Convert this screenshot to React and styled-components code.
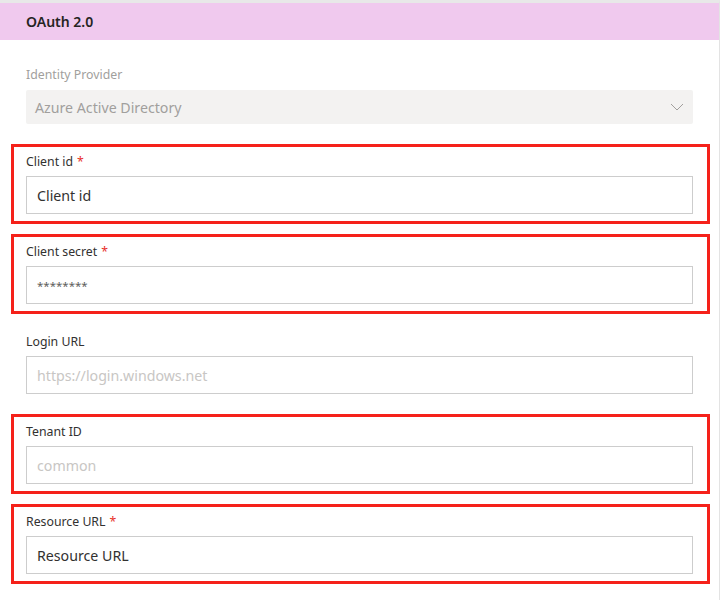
import React from 'react';
import styled, { createGlobalStyle } from 'styled-components';

const GlobalStyle = createGlobalStyle`
  body {
    margin: 0;
    background: #ffffff;
    font-family: "Noto Sans", "Open Sans", sans-serif;
  }
`;

const Page = styled.div`
  width: 720px;
  height: 600px;
  box-sizing: border-box;
  border-right: 1px solid #e3e3e3;
  border-top: 3px solid #e8e8e8;
  background: #ffffff;
`;

const Header = styled.div`
  height: 37px;
  background: #f0c9ee;
  display: flex;
  align-items: center;
  padding-left: 26px;
  font-size: 14px;
  font-weight: 600;
  color: #252423;
`;

const Fields = styled.div`
  padding: 14px 9px 0 11px;
  display: flex;
  flex-direction: column;
  gap: 10px;
`;

const Field = styled.div`
  height: 80px;
  box-sizing: border-box;
  border: 3px solid ${(p) => (p.$highlight ? '#f5211a' : 'transparent')};
  padding: ${(p) => (p.$select ? '8px' : '5px')} 14px 0 12px;
  display: flex;
  flex-direction: column;
  gap: ${(p) => (p.$select ? '5px' : '4px')};
`;

const Label = styled.div`
  font-size: 12.3px;
  line-height: 20px;
  color: ${(p) => (p.$disabled ? '#a19f9d' : '#323130')};
`;

const Required = styled.span`
  color: #e8302a;
  margin-left: 4px;
`;

const Select = styled.div`
  height: 34px;
  background: #f3f2f1;
  border-radius: 2px;
  display: flex;
  align-items: center;
  justify-content: space-between;
  padding: 0 9px;
  font-size: 14.2px;
  color: #a19f9d;
`;

const Input = styled.input`
  height: 38px;
  box-sizing: border-box;
  width: 100%;
  border: 1px solid #cdcdcd;
  padding: 0 10px;
  font-family: inherit;
  font-size: ${(p) => (p.$masked ? '11.5px' : '14.2px')};
  color: ${(p) => (p.$masked ? '#605e5c' : '#323130')};
  background: #ffffff;
  outline: none;
  &::placeholder {
    color: #c8c6c4;
  }
`;

const Chevron = () => (
  <svg width="14" height="8" viewBox="0 0 14 8" fill="none">
    <path d="M1 1l6 6 6-6" stroke="#a19f9d" strokeWidth="1" />
  </svg>
);

const FormField = ({ label, required, highlight, value, placeholder, masked }) => (
  <Field $highlight={highlight}>
    <Label>
      {label}
      {required && <Required>*</Required>}
    </Label>
    <Input $masked={masked} defaultValue={value} placeholder={placeholder} />
  </Field>
);

export default function App() {
  return (
    <>
      <GlobalStyle />
      <Page>
        <Header>OAuth 2.0</Header>
        <Fields>
          <Field $select>
            <Label $disabled>Identity Provider</Label>
            <Select>
              Azure Active Directory
              <Chevron />
            </Select>
          </Field>
          <FormField label="Client id" required highlight value="Client id" />
          <FormField label="Client secret" required highlight value="********" masked />
          <FormField label="Login URL" placeholder="https://login.windows.net" />
          <FormField label="Tenant ID" highlight placeholder="common" />
          <FormField label="Resource URL" required highlight value="Resource URL" />
        </Fields>
      </Page>
    </>
  );
}
